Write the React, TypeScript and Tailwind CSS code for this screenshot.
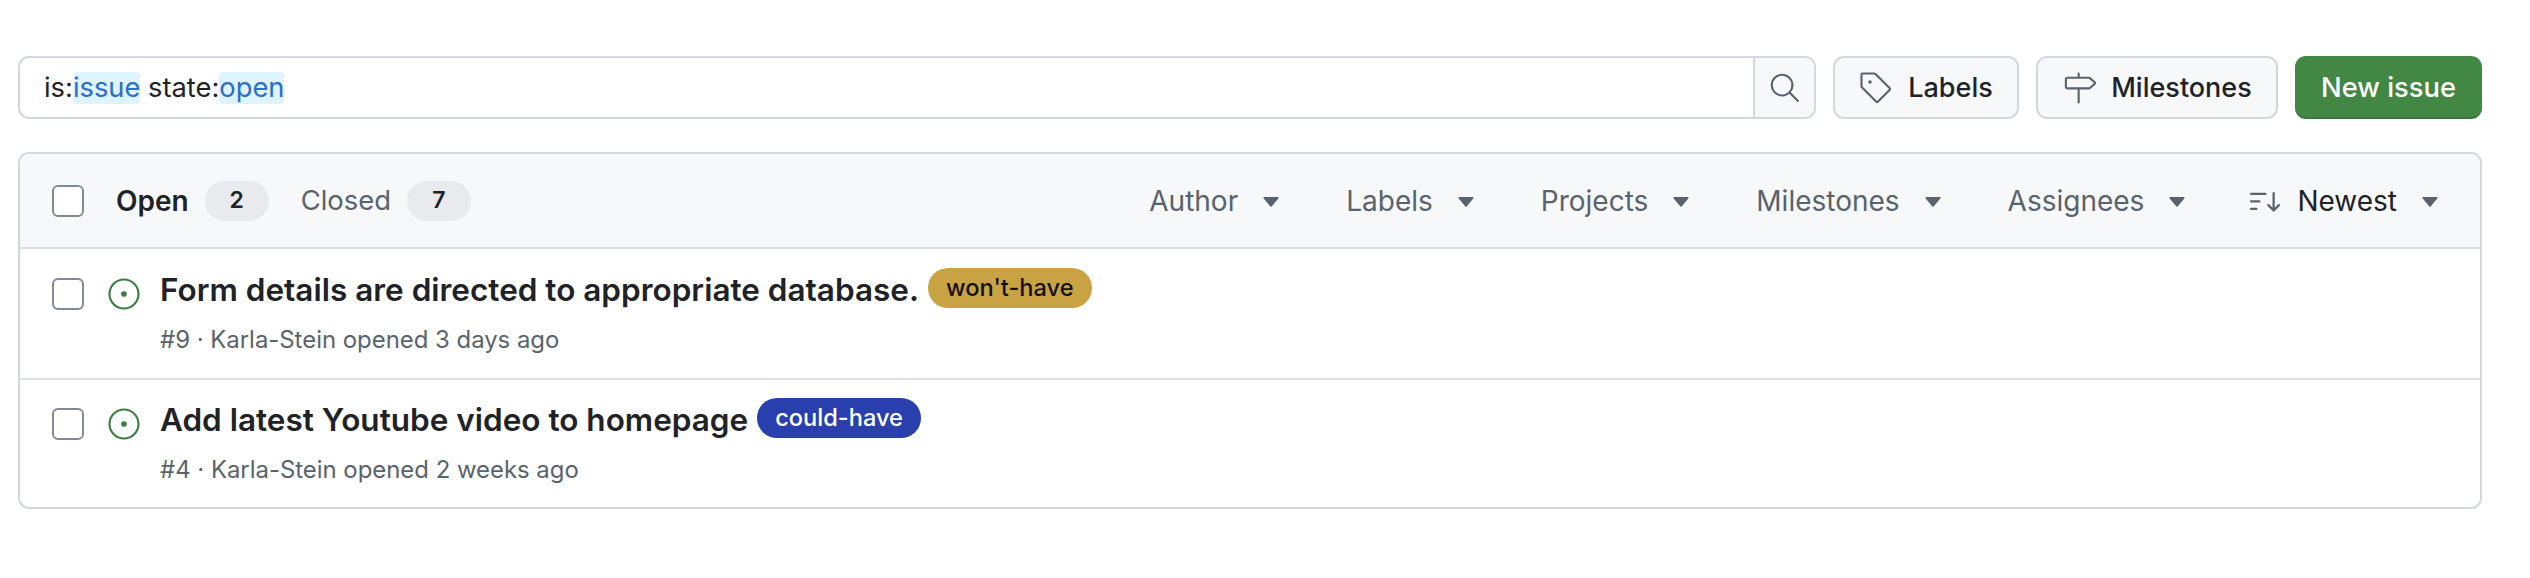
import React from 'react';
import { GoSearch, GoTag, GoMilestone, GoIssueOpened, GoSortDesc } from 'react-icons/go';

const Caret = () => (
  <svg width="16" height="10" viewBox="0 0 16 10" className="shrink-0 mt-[3px]" fill="#59636e">
    <path d="M1.4 0h13.2c.9 0 1.3 1 .7 1.6L8.7 9.4a1 1 0 0 1-1.4 0L.7 1.6C.1 1 .5 0 1.4 0Z" />
  </svg>
);

const Checkbox = () => (
  <span className="block w-[32px] h-[32px] shrink-0 rounded-[6px] border-2 border-[#818b98] bg-white" />
);

const FilterMenu = ({ label }: { label: string }) => (
  <div className="flex items-center gap-[25px] text-[#59636e]">
    <span>{label}</span>
    <Caret />
  </div>
);

const issues = [
  {
    title: 'Form details are directed to appropriate database.',
    label: "won't-have",
    labelClass: 'bg-[#c9a244] text-[#111111]',
    meta: '#9 · Karla-Stein opened 3 days ago',
  },
  {
    title: 'Add latest Youtube video to homepage',
    label: 'could-have',
    labelClass: 'bg-[#2a3fae] text-white',
    meta: '#4 · Karla-Stein opened 2 weeks ago',
  },
];

export default function App() {
  return (
    <div className="h-[578px] bg-white pl-[18px] pr-[48px] pt-[56px] font-['Inter',sans-serif] text-[#1f2328]">
      <div className="flex h-[63px] gap-[17px]">
        <div className="flex flex-1 rounded-[11px] border-2 border-[#d4d8de] bg-white overflow-hidden">
          <div className="flex-1 flex items-center pl-[24px] pt-[1px] text-[27.3px] leading-[32px]">
            <span>is:</span>
            <span className="bg-[#ddf4ff] text-[#2d6cc9] rounded-[4px]">issue</span>
            <span className="whitespace-pre"> state:</span>
            <span className="bg-[#ddf4ff] text-[#2d6cc9] rounded-[4px]">open</span>
          </div>
          <div className="w-[61px] flex items-center justify-center border-l-2 border-[#d4d8de] bg-[#f6f8fa] text-[#59636e]">
            <GoSearch size={33} />
          </div>
        </div>
        <div className="w-[186px] flex items-center justify-center gap-[15px] rounded-[11px] border-2 border-[#d4d8de] bg-[#f6f8fa] text-[27px] font-medium">
          <GoTag size={34} className="text-[#59636e]" />
          <span className="pt-[2px]">Labels</span>
        </div>
        <div className="w-[242px] flex items-center justify-center gap-[15px] rounded-[11px] border-2 border-[#d4d8de] bg-[#f6f8fa] text-[27px] font-medium">
          <GoMilestone size={34} className="text-[#59636e]" />
          <span className="pt-[2px]">Milestones</span>
        </div>
        <div className="w-[187px] flex items-center justify-center rounded-[11px] bg-[#438744] border-b-2 border-[#3a763b] text-white text-[27.3px] font-medium">
          <span className="pt-[3px]">New issue</span>
        </div>
      </div>

      <div className="mt-[33px] rounded-[11px] border-2 border-[#d4d8de] bg-white overflow-hidden">
        <div className="h-[95px] flex items-center justify-between pl-[32px] pr-[42px] bg-[#f6f8fa] border-b-2 border-[#dcdfe3] text-[28px]">
          <div className="flex items-center">
            <Checkbox />
            <span className="ml-[32px] font-semibold">Open</span>
            <span className="ml-[16px] w-[64px] h-[40px] rounded-full bg-[#e8eaed] flex items-center justify-center text-[23px] font-semibold">2</span>
            <span className="ml-[32px] text-[27.4px] text-[#59636e]">Closed</span>
            <span className="ml-[16px] w-[64px] h-[40px] rounded-full bg-[#e8eaed] flex items-center justify-center text-[23px] font-semibold">7</span>
          </div>
          <div className="flex items-center gap-[67px]">
            <FilterMenu label="Author" />
            <FilterMenu label="Labels" />
            <FilterMenu label="Projects" />
            <FilterMenu label="Milestones" />
            <FilterMenu label="Assignees" />
            <div className="flex items-center gap-[25px] -ml-[5px]">
              <div className="flex items-center gap-[14px]">
                <GoSortDesc size={36} className="text-[#59636e]" />
                <span>Newest</span>
              </div>
              <Caret />
            </div>
          </div>
        </div>

        {issues.map((issue, index) => (
          <div
            key={issue.meta}
            className={`h-[129px] flex pl-[32px] ${index > 0 ? 'pt-[28px] border-t-2 border-[#dfe1e5]' : 'pt-[29px]'}`}
          >
            <Checkbox />
            <GoIssueOpened size={34} className="ml-[23px] -mt-[1px] text-[#3a7d42] shrink-0" />
            <div className="ml-[19px]">
              <div className="flex items-start">
                <span className="-mt-[6px] text-[31.5px] leading-[36px] font-semibold">{issue.title}</span>
                <span className={`ml-[9px] -mt-[10px] h-[40px] px-[18px] rounded-full flex items-center text-[23.6px] font-medium ${issue.labelClass}`}>
                  {issue.label}
                </span>
              </div>
              <div className="mt-[17px] text-[23.9px] leading-[30px] text-[#59636e]">{issue.meta}</div>
            </div>
          </div>
        ))}
      </div>
    </div>
  );
}
